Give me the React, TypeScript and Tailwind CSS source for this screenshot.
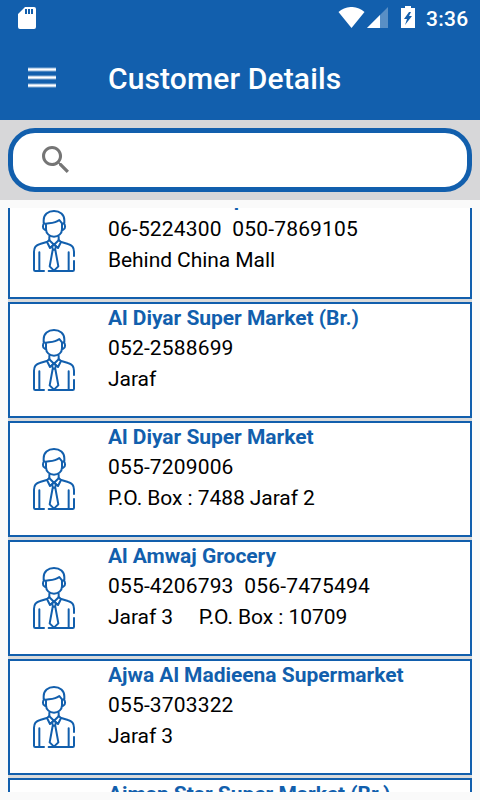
import { Fragment } from "react";

interface Customer {
  name: string;
  line1: string;
  line2: string;
}

const customers: Customer[] = [
  { name: "Al Manara Super Market", line1: "06-5224300  050-7869105", line2: "Behind China Mall" },
  { name: "Al Diyar Super Market (Br.)", line1: "052-2588699", line2: "Jaraf" },
  { name: "Al Diyar Super Market", line1: "055-7209006", line2: "P.O. Box : 7488 Jaraf 2" },
  { name: "Al Amwaj Grocery", line1: "055-4206793  056-7475494", line2: "Jaraf 3     P.O. Box : 10709" },
  { name: "Ajwa Al Madieena Supermarket", line1: "055-3703322", line2: "Jaraf 3" },
  { name: "Ajman Star Super Market (Br.)", line1: "", line2: "" },
];

function PersonIcon() {
  return (
    <svg
      viewBox="36 24 132 192"
      className="h-16 w-11 shrink-0"
      fill="none"
      stroke="#125fad"
      strokeWidth="6"
      strokeLinecap="round"
      strokeLinejoin="round"
    >
      <path d="M71 66V58C71 41 84 30 102 30s31 11 31 28v8" />
      <path d="M74 67c-7 3-7 16 0 19l4 1M130 67c7 3 7 16 0 19l-4 1" />
      <path d="M78 68v17c0 13 11 22 24 22s24-9 24-22V67l-8-10c-12 10-26 9-40 11Z" />
      <path d="M88 107v11l14 13 14-13v-11" />
      <path d="M88 117l-7 6 9 18 12-11M116 117l7 6-9 18-12-11" />
      <path d="M102 130l-6 7 3 9h6l3-9ZM98 147l-9 49 13 13 13-13-9-49" />
      <path d="M80 123l-20 6c-12 3-18 11-18 23v54c0 3 1 4 4 4h26M124 123l20 6c12 3 18 11 18 23v13M162 180v26c0 3-1 4-4 4H86M58 154v54M146 154v54" />
    </svg>
  );
}

function StatusBar() {
  return (
    <div className="flex h-9 items-center pl-[18px] text-white">
      <svg viewBox="0 0 18 22" className="h-[22px] w-[18px]">
        <path
          fillRule="evenodd"
          fill="currentColor"
          d="M7 0h9a2 2 0 0 1 2 2v18a2 2 0 0 1-2 2H2a2 2 0 0 1-2-2V7ZM7 2v5h2V2Zm3 0v5h2V2Zm3 0v5h2V2Z"
        />
      </svg>
      <svg viewBox="0 0 26 21" className="mb-px ml-[302px] h-[21px] w-[27px]">
        <path fill="currentColor" d="M0 5C7-1.700 19-1.700 26 5L13 21Z" />
      </svg>
      <svg viewBox="0 0 21 21" className="mb-px ml-0.5 h-[21px] w-[21px]">
        <path fill="currentColor" fillOpacity=".3" d="M0 21 21 0v21Z" />
        <path fill="currentColor" d="M0 21 13 8v13Z" />
      </svg>
      <svg viewBox="0 0 14 22" className="mb-0.5 ml-[13px] h-[22px] w-[14px]">
        <path
          fillRule="evenodd"
          fill="currentColor"
          d="M4 0h6v2h4v20H0V2h4ZM8 6 3 13h3l-2 6 7-9H8l2-4Z"
        />
      </svg>
      <span className="ml-[11px] pt-0.5 text-[21px] leading-none font-medium tracking-[0.3px]">3:36</span>
    </div>
  );
}

function CustomerCard({ name, line1, line2 }: Customer) {
  return (
    <div className="flex h-[116px] shrink-0 border-2 border-[#125fad] bg-white pl-[22px]">
      <div className="pt-6">
        <PersonIcon />
      </div>
      <div className="ml-8 whitespace-pre text-[21px] text-black">
        <p className="h-[29px] leading-[29px] font-bold tracking-[-0.03px] text-[#125fad]">{name}</p>
        <p className="h-[31px] leading-[31px] tracking-[0.16px]">{line1}</p>
        <p className="h-[31px] leading-[31px] tracking-[-0.06px]">{line2}</p>
      </div>
    </div>
  );
}

export default function App() {
  return (
    <div className="flex h-[800px] w-[480px] flex-col overflow-hidden bg-[#fafafa] font-[Roboto,sans-serif]">
      <header className="h-[120px] shrink-0 bg-[#125fad]">
        <StatusBar />
        <div className="flex h-[84px] items-center pl-7">
          <svg viewBox="0 0 28 22" className="h-[22px] w-7" stroke="#fff">
            <path strokeWidth="4" strokeOpacity=".5" d="M0 2.500h28M0 10.500h28M0 18.500h28" />
            <path strokeWidth="2" d="M0 2.500h28M0 10.500h28M0 18.500h28" />
          </svg>
          <h1 className="ml-[52px] pt-0.5 text-[30px] leading-none font-medium tracking-[0.130px] text-white">
            Customer Details
          </h1>
        </div>
      </header>

      <div className="h-20 shrink-0 bg-[#d7d7d9] p-2">
        <div className="flex h-16 items-center rounded-[27px] border-5 border-[#125fad] bg-white pl-[29px]">
          <svg viewBox="3 3 17.490 17.490" className="mb-0.5 h-[27px] w-[27px]">
            <path
              fill="#757575"
              d="M15.500 14h-.79l-.28-.27C15.410 12.590 16 11.110 16 9.500 16 5.910 13.090 3 9.500 3S3 5.910 3 9.500 5.910 16 9.500 16c1.610 0 3.090-.59 4.230-1.570l.27.28v.79l5 4.990L20.490 19l-4.990-5zm-6 0C7.010 14 5 11.990 5 9.500S7.010 5 9.500 5 14 7.010 14 9.500 11.990 14 9.500 14z"
            />
          </svg>
        </div>
      </div>

      <main className="m-2 h-[584px] overflow-hidden">
        <div className="-mt-[25px] flex flex-col">
          {customers.map((customer, i) => (
            <Fragment key={customer.name}>
              {i > 0 && <div className="h-[3px] shrink-0 bg-[#dadada]" />}
              <CustomerCard {...customer} />
            </Fragment>
          ))}
        </div>
      </main>
    </div>
  );
}
